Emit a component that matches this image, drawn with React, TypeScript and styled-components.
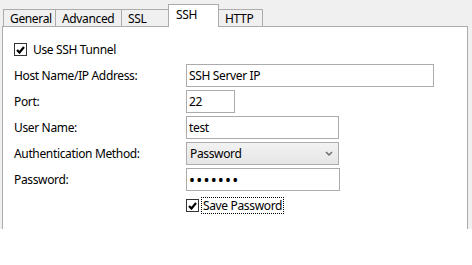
import styled, { createGlobalStyle } from 'styled-components';

const GlobalStyle = createGlobalStyle`
  html, body {
    margin: 0;
    padding: 0;
    background: #ffffff;
  }
  body {
    font-family: 'Noto Sans', 'Open Sans', sans-serif;
    font-size: 12px;
    letter-spacing: -0.35px;
    color: #000000;
  }
`;

const Frame = styled.div`
  background: #f0f0f0;
  box-sizing: border-box;
  display: flex;
  flex-direction: column;
  height: 229px;
  padding: 4px 4px 0 2px;
  width: 472px;
`;

const TabStrip = styled.div`
  align-items: flex-end;
  display: flex;
  height: 22px;
  padding-left: 1px;
  position: relative;
  z-index: 1;
`;

const Tab = styled.div<{ $width: number; $active?: boolean }>`
  align-items: center;
  background: ${p => (p.$active ? '#ffffff' : '#f0f0f0')};
  border: 1px solid #acacac;
  border-bottom: none;
  box-sizing: border-box;
  display: flex;
  height: ${p => (p.$active ? '23px' : '17px')};
  margin-bottom: ${p => (p.$active ? '-1px' : '0')};
  margin-right: -1px;
  padding: ${p => (p.$active ? '0 0 4px 7px' : '0 0 0 6px')};
  width: ${p => p.$width}px;
`;

const Panel = styled.section`
  background: #ffffff;
  border: 1px solid #acacac;
  border-bottom: none;
  flex: 1;
`;

const Form = styled.div`
  display: grid;
  grid-auto-rows: 23px;
  grid-template-columns: 172px auto;
  padding: 11px 0 0 11px;
  row-gap: 3px;
`;

const Label = styled.label`
  align-items: center;
  display: flex;
`;

const FullRow = styled.div<{ $start?: number }>`
  align-items: center;
  display: flex;
  grid-column: ${p => p.$start ?? 1} / -1;
`;

const Input = styled.input<{ $width: number }>`
  border: 1px solid #ababab;
  box-sizing: border-box;
  color: #000000;
  font-family: inherit;
  font-size: 12px;
  height: 23px;
  letter-spacing: inherit;
  margin: 0;
  outline: none;
  padding: 0 2px;
  width: ${p => p.$width}px;
`;

const PasswordInput = styled(Input)`
  font-size: 16px;
  letter-spacing: 1.2px;
`;

const SelectWrap = styled.div<{ $width: number }>`
  position: relative;
  width: ${p => p.$width}px;
`;

const Select = styled.select`
  appearance: none;
  background: linear-gradient(#f2f2f2, #e6e6e6);
  border: 1px solid #acacac;
  border-radius: 0;
  box-sizing: border-box;
  color: #000000;
  font-family: inherit;
  font-size: 12px;
  height: 23px;
  letter-spacing: inherit;
  margin: 0;
  outline: none;
  padding: 0 3px;
  width: 100%;
`;

const Chevron = styled.svg`
  pointer-events: none;
  position: absolute;
  right: 6px;
  top: 9px;
`;

const CheckLabel = styled.label`
  align-items: center;
  display: flex;
  gap: 5px;
`;

const Box = styled.span`
  align-items: center;
  background: #ffffff;
  border: 1px solid #333333;
  box-sizing: border-box;
  display: flex;
  height: 13px;
  justify-content: center;
  width: 13px;
`;

const CheckText = styled.span<{ $focused?: boolean }>`
  line-height: 15px;
  margin-left: ${p => (p.$focused ? '-2px' : '0')};
  outline: ${p => (p.$focused ? '1px dotted #000000' : 'none')};
  padding: 0 1px;
`;

const Checkbox = ({ label, focused }: { label: string; focused?: boolean }) => (
  <CheckLabel>
    <Box role="checkbox" aria-checked="true">
      <svg width="9" height="8" viewBox="0 0 9 8">
        <path d="M1 4 L3.5 6.5 L8 1" fill="none" stroke="#000" strokeWidth="2.2" />
      </svg>
    </Box>
    <CheckText $focused={focused}>{label}</CheckText>
  </CheckLabel>
);

const tabs = [
  { name: 'General', width: 53 },
  { name: 'Advanced', width: 67 },
  { name: 'SSL', width: 48 },
  { name: 'SSH', width: 51, active: true },
  { name: 'HTTP', width: 45 },
];

const App = () => (
  <>
    <GlobalStyle />
    <Frame>
      <TabStrip>
        {tabs.map(t => (
          <Tab key={t.name} $width={t.width} $active={t.active}>
            {t.name}
          </Tab>
        ))}
      </TabStrip>
      <Panel>
        <Form>
          <FullRow>
            <Checkbox label="Use SSH Tunnel" />
          </FullRow>
          <Label>Host Name/IP Address:</Label>
          <Input $width={248} defaultValue="SSH Server IP" />
          <Label>Port:</Label>
          <Input $width={49} defaultValue="22" />
          <Label>User Name:</Label>
          <Input $width={153} defaultValue="test" />
          <Label>Authentication Method:</Label>
          <SelectWrap $width={153}>
            <Select defaultValue="Password">
              <option>Password</option>
              <option>Public Key</option>
            </Select>
            <Chevron width="8" height="6" viewBox="0 0 8 6">
              <path d="M1 1 L4 4 L7 1" fill="none" stroke="#6d6d6d" strokeWidth="1.5" />
            </Chevron>
          </SelectWrap>
          <Label>Password:</Label>
          <PasswordInput $width={154} type="password" defaultValue="1234567" />
          <FullRow $start={2}>
            <Checkbox label="Save Password" focused />
          </FullRow>
        </Form>
      </Panel>
    </Frame>
  </>
);

export default App;
